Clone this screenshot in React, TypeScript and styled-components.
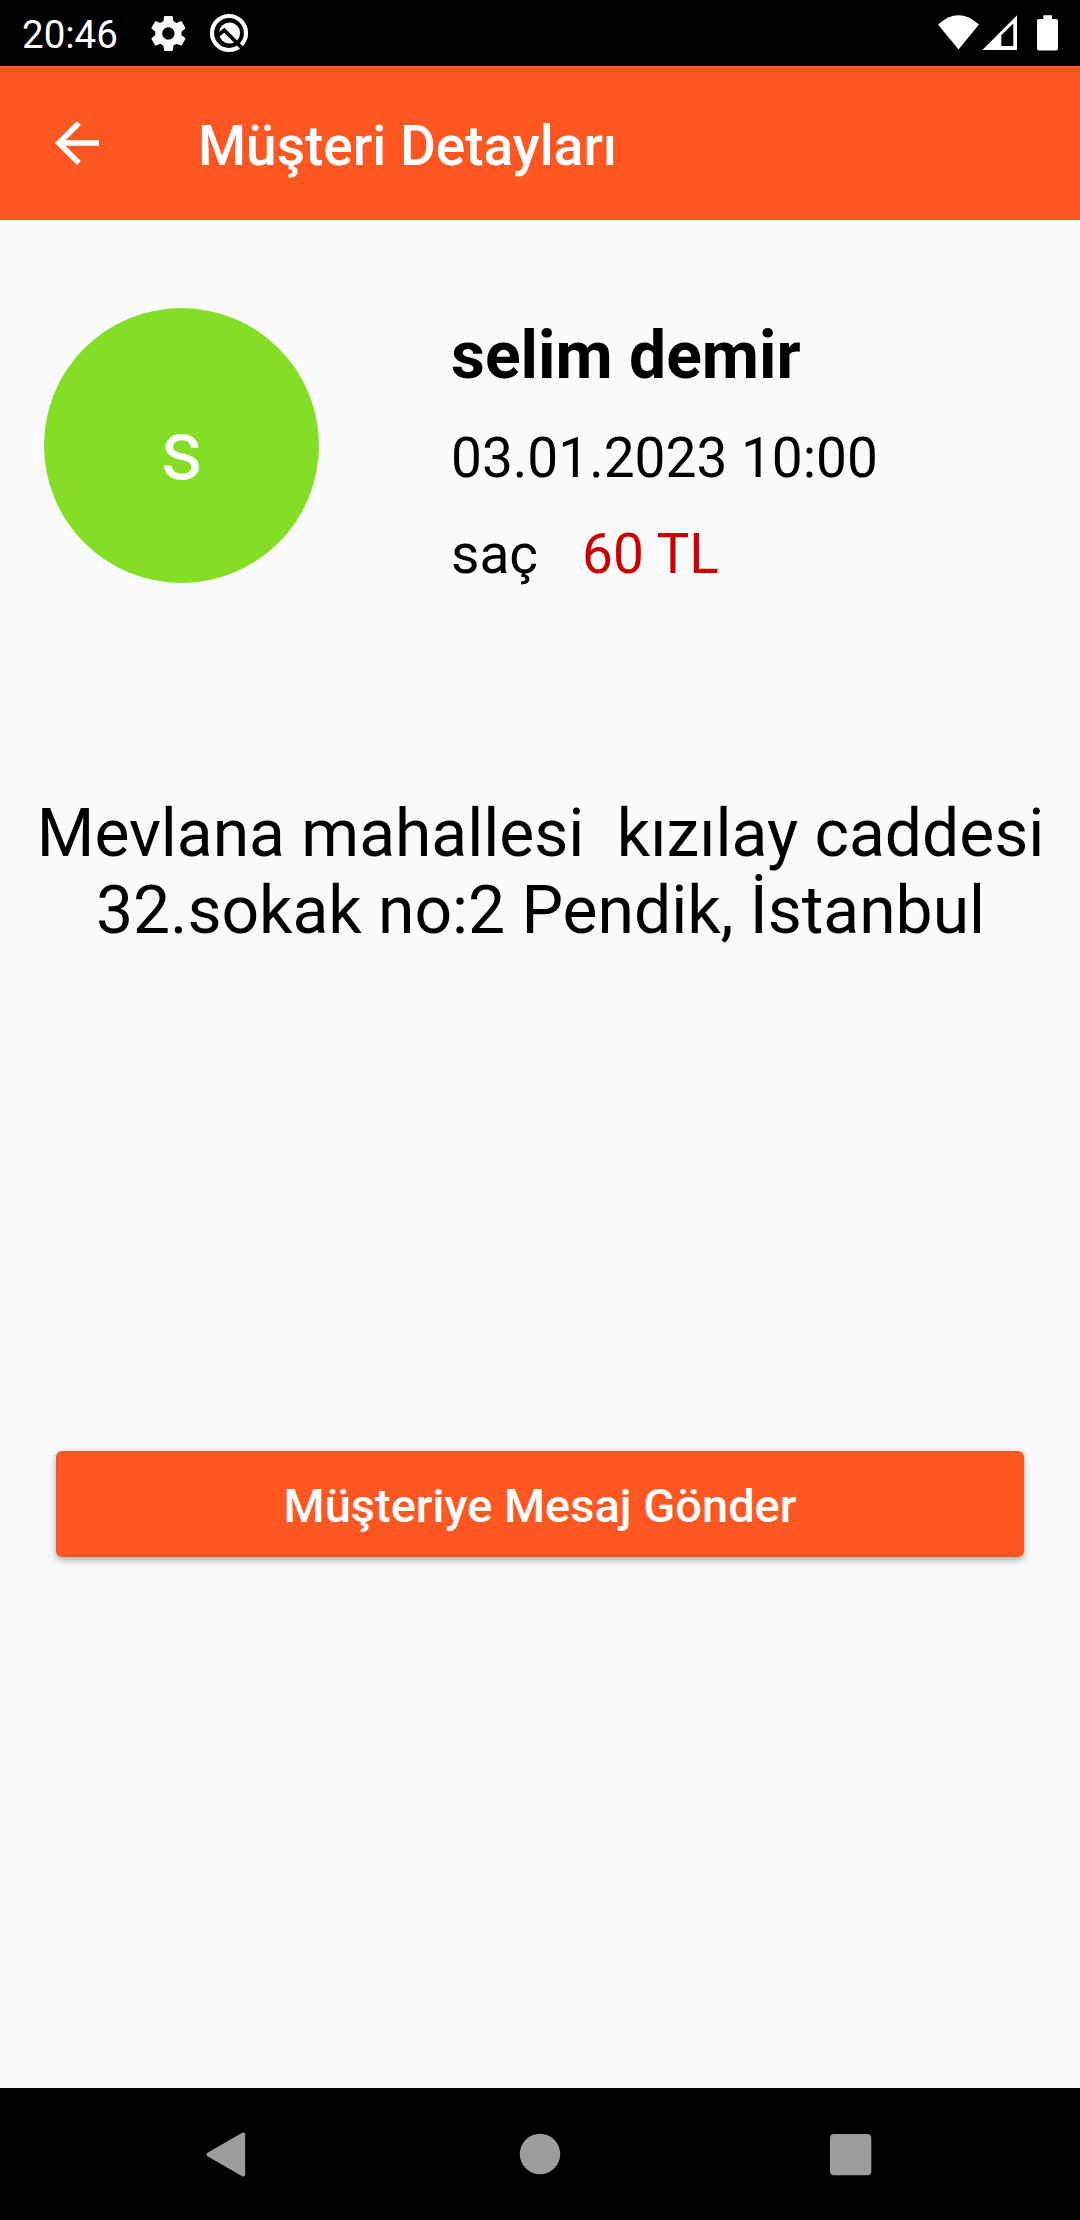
import React from "react";
import styled, { createGlobalStyle } from "styled-components";

const GlobalStyle = createGlobalStyle`
  body { margin: 0; background: #fafafa; }
  * { box-sizing: border-box; }
`;

const Screen = styled.div`
  width: 1080px;
  height: 2220px;
  display: flex;
  flex-direction: column;
  background: #fafafa;
  color: #000;
  font-family: Roboto, "Noto Sans", sans-serif;
`;

const StatusBar = styled.header`
  height: 66px;
  flex: none;
  display: flex;
  align-items: flex-start;
  justify-content: space-between;
  background: #000;
  color: #fff;
`;

const StatusGroup = styled.div`
  display: flex;
`;

const Clock = styled.span`
  width: 126px;
  padding: 12px 0 0 22px;
  font-size: 38.5px;
  line-height: 45px;
`;

const AppBar = styled.nav`
  height: 154px;
  flex: none;
  display: flex;
  align-items: center;
  padding-left: 44px;
  background: #ff5722;
  color: #fff;
`;

const BackButton = styled.button`
  display: flex;
  padding: 0;
  border: 0;
  background: none;
  color: inherit;
`;

const Title = styled.h1`
  margin: 6px 0 0 88px;
  font-size: 55px;
  line-height: 64px;
  font-weight: 500;
`;

const Content = styled.main`
  flex: 1;
  display: flex;
  flex-direction: column;
`;

const Customer = styled.section`
  display: flex;
  gap: 132px;
  padding: 88px 44px 0;
`;

const Avatar = styled.div`
  width: 275px;
  height: 275px;
  flex: none;
  display: flex;
  align-items: center;
  justify-content: center;
  padding-top: 9px;
  border-radius: 50%;
  background: #84de26;
  color: #fff;
  font-size: 82.5px;
  line-height: 97px;
`;

const Info = styled.div`
  display: flex;
  flex-direction: column;
  padding-top: 9px;
`;

const Name = styled.h2`
  margin: 0;
  font-size: 66px;
  line-height: 78px;
  font-weight: 700;
`;

const Detail = styled.p<{ $gap: number }>`
  display: flex;
  gap: 44px;
  margin: ${(p) => p.$gap}px 0 0;
  font-size: 55px;
  line-height: 64px;
`;

const Price = styled.span`
  color: #cc0000;
`;

const Address = styled.p`
  margin: 209px 0 0;
  padding-left: 1px;
  font-size: 66px;
  line-height: 77px;
  letter-spacing: -0.04px;
  text-align: center;
  white-space: pre;
`;

const MessageButton = styled.button`
  height: 106px;
  margin: 502px 56px 0;
  padding: 2px 0 0;
  border: 0;
  border-radius: 6px;
  background: #ff5722;
  color: #fff;
  font: 500 47px/55px Roboto, "Noto Sans", sans-serif;
  box-shadow: 0 4px 7px rgba(0, 0, 0, 0.25), 0 0 5px rgba(0, 0, 0, 0.1);
`;

const NavBar = styled.footer`
  height: 132px;
  flex: none;
  display: flex;
  align-items: center;
  justify-content: space-between;
  padding: 0 196px 0 192px;
  background: #000;
`;

export default function App() {
  return (
    <>
      <GlobalStyle />
      <Screen>
        <StatusBar>
          <StatusGroup>
            <Clock>20:46</Clock>
            <svg width="126" height="66" viewBox="126 0 126 66" fill="#fff">
              <path
                transform="translate(147.4 12.4) scale(1.75)"
                d="M19.43 12.98c.04-.32.07-.64.07-.98s-.03-.66-.07-.98l2.11-1.65c.19-.15.24-.42.12-.64l-2-3.46c-.12-.22-.39-.3-.61-.22l-2.49 1c-.52-.4-1.08-.73-1.69-.98l-.38-2.65C14.46 2.18 14.25 2 14 2h-4c-.25 0-.46.18-.49.42l-.38 2.65c-.61.25-1.17.59-1.69.98l-2.49-1c-.23-.09-.49 0-.61.22l-2 3.46c-.13.22-.07.49.12.64l2.11 1.65c-.04.32-.07.65-.07.98s.03.66.07.98l-2.11 1.65c-.19.15-.24.42-.12.64l2 3.46c.12.22.39.3.61.22l2.49-1c.52.4 1.08.73 1.69.98l.38 2.65c.03.24.24.42.49.42h4c.25 0 .46-.18.49-.42l.38-2.65c.61-.25 1.17-.59 1.69-.98l2.49 1c.23.09.49 0 .61-.22l2-3.46c.12-.22.07-.49-.12-.64l-2.11-1.65zM12 15.5c-1.93 0-3.5-1.57-3.5-3.5s1.57-3.5 3.5-3.5 3.5 1.57 3.5 3.5-1.57 3.5-3.5 3.5z"
              />
              <circle cx="229" cy="33" r="17" fill="none" stroke="#fff" strokeWidth="4.2" />
              <circle cx="229.6" cy="33" r="10.5" />
              <path d="M216.5 36.5 L224.3 30.3 L246 52" fill="none" stroke="#000" strokeWidth="3.7" />
            </svg>
          </StatusGroup>
          <svg width="160" height="66" viewBox="920 0 160 66" fill="#fff">
            <path d="M938 24.5 Q958.5 6 979 24.5 L958.5 49.5 Z" />
            <path fillRule="evenodd" d="M982.3 50 L1017 15.3 V50 Z M1001.3 35.3 V46 H1013.3 V23.5 Z" />
            <path d="M1043.3 15.3 H1052 V19 H1056 Q1058 19 1058 21 V48.5 Q1058 50.5 1056 50.5 H1039 Q1037 50.5 1037 48.5 V21 Q1037 19 1039 19 H1043.3 Z" />
          </svg>
        </StatusBar>
        <AppBar>
          <BackButton aria-label="Geri">
            <svg width="66" height="66" viewBox="0 0 24 24" fill="currentColor">
              <path d="M20 11H7.83l5.59-5.59L12 4l-8 8 8 8 1.41-1.41L7.83 13H20v-2z" />
            </svg>
          </BackButton>
          <Title>Müşteri Detayları</Title>
        </AppBar>
        <Content>
          <Customer>
            <Avatar>s</Avatar>
            <Info>
              <Name>selim demir</Name>
              <Detail $gap={31}>03.01.2023 10:00</Detail>
              <Detail $gap={32}>
                <span>saç</span>
                <Price>60 TL</Price>
              </Detail>
            </Info>
          </Customer>
          <Address>{"Mevlana mahallesi  kızılay caddesi\n32.sokak no:2 Pendik, İstanbul"}</Address>
          <MessageButton>Müşteriye Mesaj Gönder</MessageButton>
        </Content>
        <NavBar>
          <svg width="66" height="66" viewBox="192 2121 66 66" fill="#9c9c9c" stroke="#9c9c9c" strokeWidth="4" strokeLinejoin="round">
            <path d="M243.2 2134.5 V2174.5 L208.5 2154.5 Z" />
          </svg>
          <svg width="66" height="66" viewBox="0 0 66 66" fill="#9c9c9c">
            <circle cx="35" cy="33" r="20.2" />
          </svg>
          <svg width="66" height="66" viewBox="818 2121 66 66" fill="#9c9c9c">
            <rect x="830" y="2134" width="41.3" height="41.3" rx="4" />
          </svg>
        </NavBar>
      </Screen>
    </>
  );
}
